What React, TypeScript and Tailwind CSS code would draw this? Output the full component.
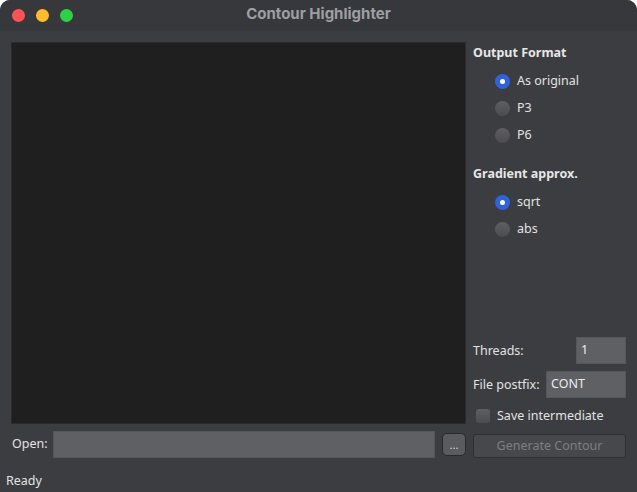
import React from 'react';

const font = { fontFamily: '"Noto Sans", "Open Sans", sans-serif' };

function Radio({ label, checked }: { label: string; checked?: boolean }) {
  return (
    <div className="flex items-center h-[27px] pl-[22px]">
      {checked ? (
        <span className="w-[15px] h-[15px] rounded-full bg-[#2f63de] flex items-center justify-center">
          <span className="w-[5px] h-[5px] rounded-full bg-white" />
        </span>
      ) : (
        <span className="w-[15px] h-[15px] rounded-full bg-gradient-to-b from-[#5f5f61] to-[#4c4c4e]" />
      )}
      <span className="ml-[7px] text-[12.5px] text-[#e2e2e2]">{label}</span>
    </div>
  );
}

export default function App() {
  return (
    <div className="w-[637px] h-[492px] bg-white" style={font}>
      <div className="w-full h-full rounded-t-[10px] overflow-hidden bg-[#3c3d40] flex flex-col">
        {/* Title bar */}
        <div className="h-[31px] bg-[#37383b] relative flex items-center justify-center shrink-0 pb-[2px]">
          <div className="absolute left-[12px] top-[9px] flex gap-[11px]">
            <span className="w-[13px] h-[13px] rounded-full bg-[#fe5257]" />
            <span className="w-[13px] h-[13px] rounded-full bg-[#febb2e]" />
            <span className="w-[13px] h-[13px] rounded-full bg-[#2ed146]" />
          </div>
          <span
            className="text-[15px] font-bold text-[#9d9fa2]"
            style={{ fontFamily: '"Inter", "Noto Sans", sans-serif' }}
          >
            Contour Highlighter
          </span>
        </div>

        {/* Body */}
        <div className="flex gap-[7px] pl-[11px] pr-[11px] pt-[11px]">
          <div className="w-[455px] flex flex-col gap-[7px]">
            <div className="h-[382px] bg-[#1f1f1f] border border-[#2b2b2c]" />
            <div className="h-[27px] flex items-center">
              <span className="text-[12.5px] text-[#e2e2e2] ml-[1px] w-[41px]">Open:</span>
              <div className="w-[383px] h-[27px] bg-[#5f6063] border border-[#56575a]" />
              <button className="ml-[7px] w-[24px] h-[23px] rounded-[5px] bg-[#5a5b5e] border border-[#2a2a2c] text-[#d8d8d8] text-[11px] leading-none flex items-center justify-center pb-[1px]">
                ...
              </button>
            </div>
          </div>

          <div className="w-[153px] h-[416px] flex flex-col pt-[1px]">
            <div className="text-[12.5px] font-bold text-[#e6e6e6] leading-[20px]">Output Format</div>
            <div className="mt-[5px]">
              <Radio label="As original" checked />
              <Radio label="P3" />
              <Radio label="P6" />
            </div>
            <div className="text-[12.5px] font-bold text-[#e6e6e6] leading-[20px] mt-[15px]">Gradient approx.</div>
            <div className="mt-[5px]">
              <Radio label="sqrt" checked />
              <Radio label="abs" />
            </div>

            <div className="mt-auto flex flex-col">
              <div className="flex items-center justify-between h-[27px]">
                <span className="text-[12.5px] text-[#e2e2e2] pt-[1px]">Threads:</span>
                <div className="w-[50px] h-[27px] bg-[#5f6063] border border-[#56575a] text-[12.5px] text-[#ececec] flex items-center pl-[4px]">
                  1
                </div>
              </div>
              <div className="flex items-center justify-between h-[27px] mt-[7px]">
                <span className="text-[12.5px] text-[#e2e2e2] pt-[1px]">File postfix:</span>
                <div className="w-[80px] h-[27px] bg-[#5f6063] border border-[#56575a] text-[12.5px] text-[#ececec] flex items-center pl-[4px]">
                  CONT
                </div>
              </div>
              <div className="flex items-center h-[20px] mt-[8px] pl-[3px]">
                <span className="w-[14px] h-[14px] rounded-[3px] bg-gradient-to-b from-[#5f5f61] to-[#4c4c4e]" />
                <span className="ml-[7px] text-[12.5px] text-[#e2e2e2]">Save intermediate</span>
              </div>
              <button className="mt-[8px] h-[24px] w-full rounded-[3px] bg-[#47484b] border border-[#2f3033] text-[12.5px] text-[#7d7e81]">
                Generate Contour
              </button>
            </div>
          </div>
        </div>

        {/* Status bar */}
        <div className="mt-auto h-[24px] flex items-center pl-[6px] pt-[3px]">
          <span className="text-[12.5px] text-[#e2e2e2]">Ready</span>
        </div>
      </div>
    </div>
  );
}
